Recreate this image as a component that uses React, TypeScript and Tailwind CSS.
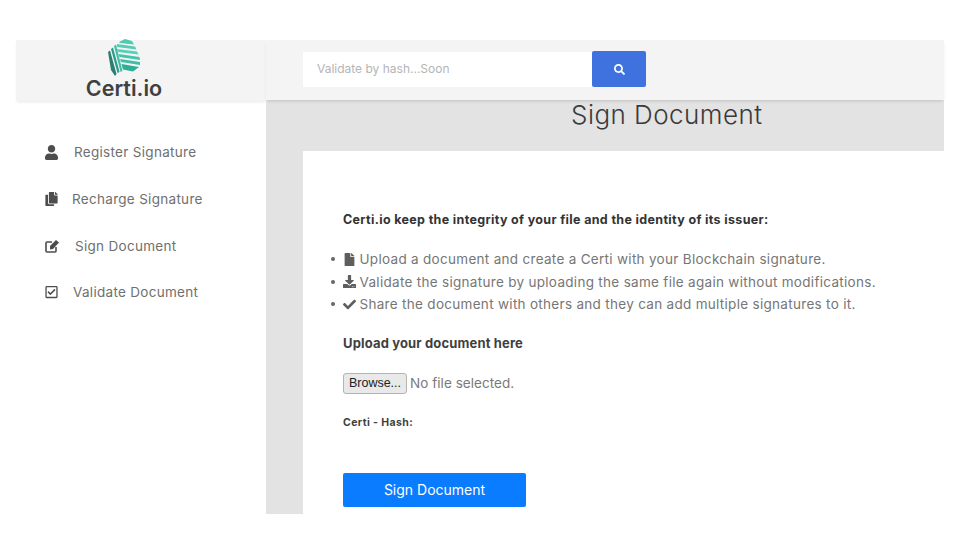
import { FaUser, FaCopy, FaRegCheckSquare, FaFile, FaDownload, FaCheck, FaSearch } from "react-icons/fa";

const font = { fontFamily: "Inter, 'Open Sans', sans-serif" };

function Logo() {
  return (
    <svg width="32" height="37" viewBox="0 0 32 37" className="block">
      {/* light stripes */}
      <path d="M11 3 L17 0 L24 2 L26 5.5 L12 4 Z" fill="#4ccab2" />
      <path d="M9 5 L27 7.5 L28.5 10.5 L9 8 Z" fill="#55cdb6" />
      <path d="M9 10 L29 12.5 L30.5 15.5 L10 13 Z" fill="#5ad0ba" />
      <path d="M10.5 15 L31.5 18 L32 21 L11.5 18 Z" fill="#45c4ac" />
      <path d="M12 20 L32 23 L32 26 L13 23 Z" fill="#3fbea6" />
      <path d="M13.5 25 L31 28 L25 32.5 L15 30.5 Z" fill="#2fae96" />
      {/* darker side */}
      <path d="M6 7 L8 5.5 L14.5 32 L12.5 33 Z" fill="#45bfa8" />
      <path d="M3 10 L5 8.5 L11.5 33 L9.5 34 Z" fill="#2e9c8a" />
      <path d="M0 13 L2 11.5 L8.5 35 L7 37 L3 31 Z" fill="#2a7f72" />
    </svg>
  );
}

function EditIcon() {
  return (
    <svg width="15" height="14" viewBox="0 0 15 14" className="ml-[2px] block shrink-0">
      <path d="M11 8 V12 a1 1 0 0 1 -1 1 H2 a1 1 0 0 1 -1 -1 V4 a1 1 0 0 1 1 -1 H7" fill="none" stroke="#4d4d4d" strokeWidth="1.6" />
      <path d="M5 7 L11 1 L14 3.5 L8 10 L5 10.5 Z" fill="#4d4d4d" />
    </svg>
  );
}

function NavItem({ icon, label, gap, size }: { icon: React.ReactNode; label: string; gap: string; size: string }) {
  return (
    <div className="flex h-[46.7px] items-center pl-[29px] text-[#6f6f6f]">
      <span className={`flex w-[13px] shrink-0 items-center justify-center ${size} text-[#4d4d4d]`}>{icon}</span>
      <span className={`${gap} text-[13.5px] tracking-[0.3px]`}>{label}</span>
    </div>
  );
}

function Bullet({ icon, text }: { icon: React.ReactNode; text: string }) {
  return (
    <li className="flex h-[22.5px] items-center text-[13.5px] tracking-[0.3px] text-[#767676]">
      <span className="mr-[8px] h-[4px] w-[4px] shrink-0 rounded-full bg-[#666666]" />
      <span className="mr-[3.5px] text-[13px] text-[#5e5e5e]">{icon}</span>
      <span>{text}</span>
    </li>
  );
}

export default function App() {
  return (
    <div className="h-[540px] w-[960px] overflow-hidden bg-white pb-[26px] pl-4 pr-4 pt-10" style={font}>
      <div className="flex h-full">
        <aside className="w-[250px] shrink-0">
          <div className="flex h-[61px] flex-col items-center bg-[#f4f4f4] pr-[34px] shadow-[0_2px_3px_-1px_rgba(0,0,0,0.1)]">
            <div className="mt-[-1px] h-[37px]"><Logo /></div>
            <div className="text-[21.5px] font-semibold leading-[24px] text-[#404040]">Certi.io</div>
          </div>
          <nav className="pt-[28px]">
            <NavItem icon={<FaUser />} label="Register Signature" gap="ml-[16px]" size="text-[15px]" />
            <NavItem icon={<FaCopy />} label="Recharge Signature" gap="ml-[14px]" size="text-[14px]" />
            <NavItem icon={<EditIcon />} label="Sign Document" gap="ml-[17px]" size="text-[14px]" />
            <NavItem icon={<FaRegCheckSquare />} label="Validate Document" gap="ml-[15px]" size="text-[14px]" />
          </nav>
        </aside>
        <main className="flex min-w-0 flex-1 flex-col bg-[#e3e3e3]">
          <header className="flex h-[60px] shrink-0 items-center bg-[#f4f4f4] pb-[2px] pl-[37px] shadow-[0_2px_3px_-1px_rgba(0,0,0,0.15)]">
            <div className="flex h-[35px] w-[289px] items-center bg-white pl-[14px] text-[12px] text-[#b5b5b5]">Validate by hash...Soon</div>
            <button className="flex h-[36px] w-[54px] items-center justify-center rounded-[2px] bg-[#3f72de] text-[11px] text-white"><FaSearch /></button>
          </header>
          <h1 className="h-[51px] pl-[305px] pt-[1px] text-[26px] font-light leading-[28px] tracking-[0.45px] text-[#3a3a3a]">Sign Document</h1>
          <section className="ml-[37px] flex-1 bg-white pl-[40px] pt-[60px]">
            <p className="text-[12.5px] font-bold leading-[18px] tracking-[0.34px] text-[#333333]">Certi.io keep the integrity of your file and the identity of its issuer:</p>
            <ul className="ml-[-12px] mt-[19px]">
              <Bullet icon={<FaFile />} text="Upload a document and create a Certi with your Blockchain signature." />
              <Bullet icon={<FaDownload />} text="Validate the signature by uploading the same file again without modifications." />
              <Bullet icon={<FaCheck />} text="Share the document with others and they can add multiple signatures to it." />
            </ul>
            <p className="mt-[18px] text-[13px] font-bold leading-[18px] tracking-[0.15px] text-[#3f3f3f]">Upload your document here</p>
            <div className="mt-[21px] flex items-center">
              <button className="h-[21px] w-[64px] rounded-[3px] border border-[#b4b4b4] bg-[#e9e9e9] text-[12.5px] leading-[18px] text-[#222222]" style={{ fontFamily: "'Liberation Sans', sans-serif" }}>Browse...</button>
              <span className="ml-[3px] text-[13.5px] tracking-[0.05px] text-[#7a7a7a]">No file selected.</span>
            </div>
            <p className="mt-[22px] text-[10.5px] font-bold leading-[14px] tracking-[0.4px] text-[#3f3f3f]">Certi - Hash:</p>
            <button className="mt-[43px] h-[34px] w-[183px] rounded-[2px] bg-[#0a7cff] text-[14px] text-white">Sign Document</button>
          </section>
        </main>
      </div>
    </div>
  );
}
